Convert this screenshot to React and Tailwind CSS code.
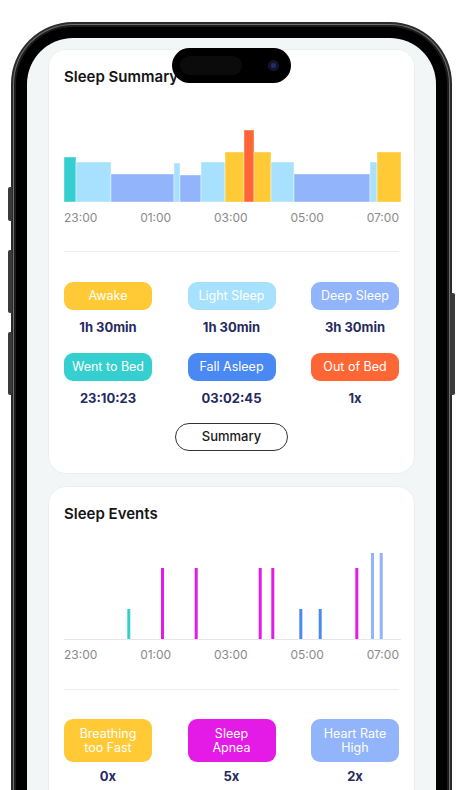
import React from "react";

const C = {
  yellow: "#FFCA35",
  light: "#A8E1FD",
  deep: "#91B4FB",
  teal: "#36CFCF",
  blue: "#4A88F4",
  orange: "#FF6636",
  magenta: "#E41AE6",
};

// stages chart: [x0, x1, top (page y), colour]
const stages = [
  [0, 12, 156, C.teal],
  [12, 47, 161, C.light],
  [47, 110, 173, C.deep],
  [110, 116, 162, C.light],
  [116, 137, 174, C.deep],
  [137, 161, 161, C.light],
  [161, 180, 151, C.yellow],
  [180, 190, 129, C.orange],
  [190, 207, 151, C.yellow],
  [207, 230, 161, C.light],
  [230, 306, 173, C.deep],
  [306, 313, 161, C.light],
  [313, 337, 151, C.yellow],
];

// events chart: [x, height, colour]
const events = [
  [63.3, 30, C.teal],
  [97, 71, C.magenta],
  [130.7, 71, C.magenta],
  [194.7, 71, C.magenta],
  [207.3, 71, C.magenta],
  [235.3, 30, C.blue],
  [254.7, 30, C.blue],
  [291.3, 71, C.magenta],
  [307, 86, C.deep],
  [315.7, 86, C.deep],
];

const hours = ["23:00", "01:00", "03:00", "05:00", "07:00"];

const Axis = () => (
  <div className="mt-[7px] flex justify-between text-[12px] leading-4 text-[#8a8a8a]">
    {hours.map((h) => (
      <span key={h}>{h}</span>
    ))}
  </div>
);

const Badge = ({ color, children, tall }) => (
  <div
    className={`flex w-[88px] items-center justify-center rounded-[9px] text-center text-[12.5px] text-white ${
      tall ? "h-[43px] leading-[14px]" : "h-[28px] leading-4"
    }`}
    style={{ background: color }}
  >
    {children}
  </div>
);

const Stat = ({ color, label, value, tall, gap }) => (
  <div className="flex w-[88px] flex-col items-center">
    <Badge color={color} tall={tall}>
      {label}
    </Badge>
    <span className={`${gap} text-[13px] font-bold leading-[18px] text-[#262a5e]`}>
      {value}
    </span>
  </div>
);

const SleepSummary = () => (
  <div className="mx-[21px] mt-[10px] rounded-[18px] border border-[#eceff0] bg-white px-[15px] pb-[22px] pt-[17px]">
    <h2 className="text-[15px] font-semibold leading-5 text-[#151515]">Sleep Summary</h2>
    <svg width="337" height="116" className="block">
      {stages.map(([x0, x1, top, c], i) => (
        <rect
          key={i}
          x={x0}
          y={top - 86}
          width={x1 - x0}
          height={201 - top}
          fill={c}
          stroke="#ffffff"
          strokeOpacity="0.5"
          strokeWidth="0.8"
        />
      ))}
    </svg>
    <Axis />
    <div className="mt-[25px] h-px bg-[#eeeeee]" />
    <div className="mt-[30px] flex justify-between">
      <Stat color={C.yellow} label="Awake" value="1h 30min" gap="mt-[8px]" />
      <Stat color={C.light} label="Light Sleep" value="1h 30min" gap="mt-[8px]" />
      <Stat color={C.deep} label="Deep Sleep" value="3h 30min" gap="mt-[8px]" />
    </div>
    <div className="mt-[17px] flex justify-between">
      <Stat color={C.teal} label="Went to Bed" value="23:10:23" gap="mt-[8px]" />
      <Stat color={C.blue} label="Fall Asleep" value="03:02:45" gap="mt-[8px]" />
      <Stat color={C.orange} label="Out of Bed" value="1x" gap="mt-[8px]" />
    </div>
    <div className="mt-[16px] flex justify-center">
      <button className="h-[28px] w-[113px] rounded-full border-[1.5px] border-[#333] text-[13px] font-medium text-[#1a1a1a]">
        Summary
      </button>
    </div>
  </div>
);

const SleepEvents = () => (
  <div className="mx-[21px] mt-[12px] rounded-[18px] border border-[#eceff0] bg-white px-[15px] pb-[40px] pt-[17px]">
    <h2 className="text-[15px] font-semibold leading-5 text-[#151515]">Sleep Events</h2>
    <svg width="337" height="116" className="block">
      <line x1="0" x2="337" y1="115.5" y2="115.5" stroke="#e6e6e6" strokeWidth="1" />
      {events.map(([x, h, c], i) => (
        <rect key={i} x={x} y={115 - h} width="3" height={h} fill={c} />
      ))}
    </svg>
    <Axis />
    <div className="mt-[26px] h-px bg-[#eeeeee]" />
    <div className="mt-[29px] flex justify-between">
      <Stat color={C.yellow} label={<>Breathing<br />too Fast</>} value="0x" tall gap="mt-[5px]" />
      <Stat color={C.magenta} label={<>Sleep<br />Apnea</>} value="5x" tall gap="mt-[5px]" />
      <Stat color={C.deep} label={<>Heart Rate<br />High</>} value="2x" tall gap="mt-[5px]" />
    </div>
  </div>
);

export default function App() {
  return (
    <div
      className="relative h-[790px] w-[463px] overflow-hidden bg-white"
      style={{ fontFamily: "Inter, 'Noto Sans', sans-serif" }}
    >
      {/* side buttons */}
      <div className="absolute left-[8px] top-[187px] h-[34px] w-[4px] rounded-l-[2px] bg-[#3a3a3a]" />
      <div className="absolute left-[8px] top-[250px] h-[63px] w-[4px] rounded-l-[2px] bg-[#3a3a3a]" />
      <div className="absolute left-[8px] top-[332px] h-[63px] w-[4px] rounded-l-[2px] bg-[#3a3a3a]" />
      <div className="absolute left-[450px] top-[293px] h-[102px] w-[5px] rounded-r-[2px] bg-[#3a3a3a]" />

      {/* phone frame */}
      <div className="ml-[11px] mt-[22px] h-[840px] w-[441px] rounded-[62px] bg-[#2a2a2a] p-[2px]">
        <div className="h-full rounded-[60px] bg-[#707070] p-px">
          <div className="h-full rounded-[59px] bg-[#1b1b1b] p-[2px]">
            <div className="h-full rounded-[57px] bg-black p-[11px]">
              <div className="h-full overflow-hidden rounded-[46px] bg-[#f3f6f7] pt-px">
                <SleepSummary />
                <SleepEvents />
              </div>
            </div>
          </div>
        </div>
      </div>

      {/* dynamic island */}
      <div className="absolute left-[172px] top-[48px] flex h-[35px] w-[119px] items-center justify-end rounded-full bg-black pr-[12px]">
        <div className="absolute left-[8px] top-[8px] h-[19px] w-[62px] rounded-full bg-[#0b0b0b]" />
        <div className="flex h-[11px] w-[11px] items-center justify-center rounded-full bg-[#141428]">
          <div className="h-[5px] w-[5px] rounded-full bg-[#1f2f6e]" />
        </div>
      </div>
    </div>
  );
}
